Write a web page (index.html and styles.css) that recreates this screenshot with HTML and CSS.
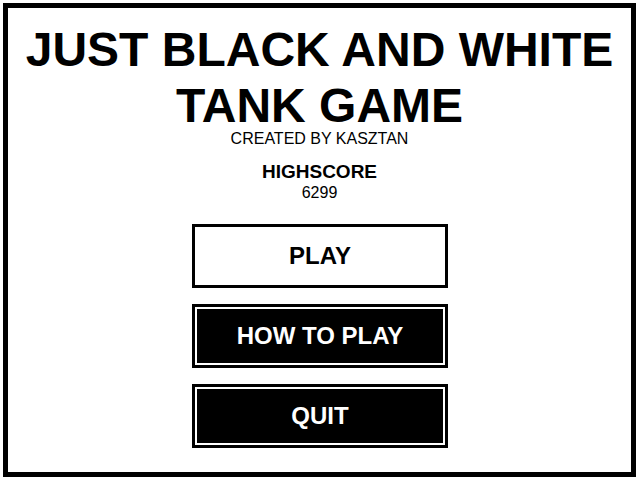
FILE: index.html
```html
<!DOCTYPE html>
<html lang="en">
  <head>
    <meta charset="UTF-8" />
    <meta name="viewport" content="width=device-width, initial-scale=1.0" />
    <title>Just Black and White Tank Game</title>
    <link rel="stylesheet" href="styles.css">
  </head>
  <body>
    <div id="menu">
      <h1 class="title">JUST BLACK AND WHITE<br />TANK GAME</h1>
      <p class="credit">CREATED BY KASZTAN</p>

      <h2 class="highscore-label">HIGHSCORE</h2>
      <p class="highscore-value">6299</p>

      <div class="buttons">
        <button class="menu-button">PLAY</button>
        <button class="menu-button dark">HOW TO PLAY</button>
        <button class="menu-button dark">QUIT</button>
      </div>
    </div>
  </body>
</html>
```

FILE: styles.css
```css
body {
  font-family: "Liberation Sans", Arial, sans-serif;
  color: black;
  background-color: white;
  margin: 0;
  padding: 3px 4px 3px 3px;
  height: 480px;
  box-sizing: border-box;
}

#menu {
  height: 100%;
  box-sizing: border-box;
  border: 5px solid black;
  padding-top: 14px;
  display: flex;
  flex-direction: column;
  align-items: center;
  text-align: center;
}

.title {
  margin: 0;
  font-size: 48px;
  line-height: 56px;
  font-weight: bold;
}

/* tight line box so it sits right under the title */
.credit {
  margin: 0;
  font-size: 16px;
  line-height: 10px;
}

.highscore-label {
  margin: 17px 0 0;
  font-size: 19px;
  line-height: 22px;
  font-weight: bold;
}

.highscore-value {
  margin: 1px 0 0;
  font-size: 16px;
  line-height: 18px;
}

.buttons {
  margin-top: 22px;
  margin-left: 1px;
  display: flex;
  flex-direction: column;
  gap: 16px;
}

.menu-button {
  width: 256px;
  height: 64px;
  padding: 0;
  font-family: inherit;
  font-size: 24px;
  font-weight: bold;
  color: black;
  background-color: white;
  border: 3px solid black;
  border-radius: 0;
  cursor: pointer;
}

.menu-button.dark {
  color: white;
  background-color: black;
  box-shadow: inset 0 0 0 2px white;
}
```
